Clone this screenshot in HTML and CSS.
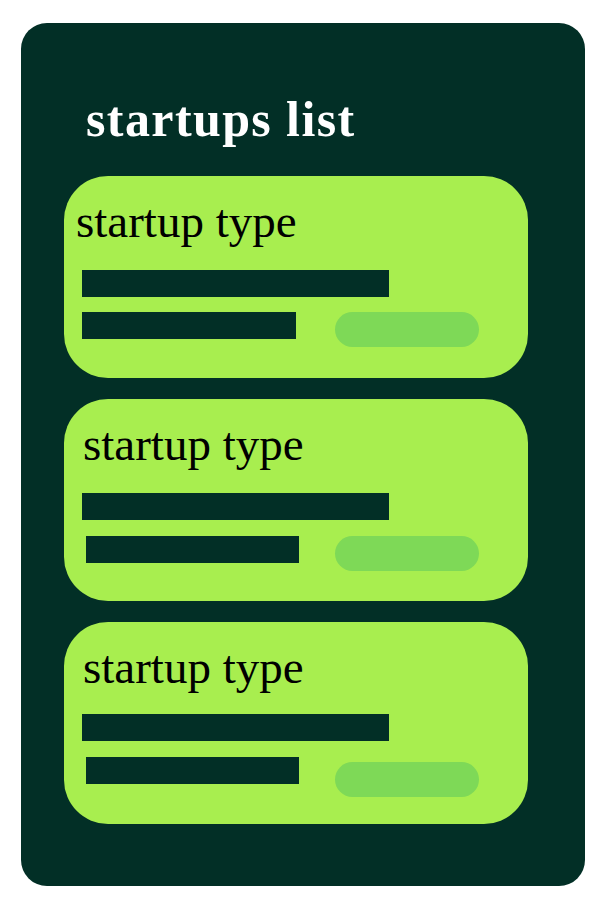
FILE: index.html
```html
<!DOCTYPE html>
<html>
<head>
<meta charset="utf-8">
<link rel="stylesheet" href="styles.css">
</head>
<body>
<main class="panel">
  <h1 class="panel__title">startups list</h1>
  <section class="list">
    <article class="card">
      <h2 class="card__title">startup type</h2>
      <div class="bar bar--long"></div>
      <div class="card__row">
        <div class="bar bar--short"></div>
        <div class="pill"></div>
      </div>
    </article>
    <article class="card card--inset">
      <h2 class="card__title">startup type</h2>
      <div class="bar bar--long"></div>
      <div class="card__row">
        <div class="bar bar--short"></div>
        <div class="pill"></div>
      </div>
    </article>
    <article class="card card--inset card--low">
      <h2 class="card__title">startup type</h2>
      <div class="bar bar--long"></div>
      <div class="card__row">
        <div class="bar bar--short"></div>
        <div class="pill"></div>
      </div>
    </article>
  </section>
</main>
</body>
</html>
```
FILE: styles.css
```css
html, body {
  margin: 0;
  padding: 0;
  background: #ffffff;
}

body {
  padding: 23px 0 0 21px;
}

.panel {
  box-sizing: border-box;
  width: 564px;
  height: 863px;
  background: #022f26;
  border-radius: 26px;
  padding: 71px 0 0 43px;
}

.panel__title {
  margin: 0 0 32px 22px;
  font-family: "Liberation Serif", serif;
  font-weight: 700;
  font-size: 50px;
  line-height: 50px;
  letter-spacing: 1.4px;
  color: #ffffff;
}

.list {
  display: flex;
  flex-direction: column;
  gap: 21px;
  width: 464px;
}

.card {
  box-sizing: border-box;
  height: 202px;
  background: #a8ee4f;
  border-radius: 44px;
  padding: 22px 0 0 18px;
}

.card__title {
  margin: 0 0 25px -6px;
  font-family: "Liberation Serif", serif;
  font-weight: 400;
  font-size: 47px;
  line-height: 47px;
  color: #000000;
}

.card--inset .card__title {
  margin-left: 1px;
}

.card--low .card__title {
  margin-bottom: 23px;
}

.bar {
  background: #022f26;
  height: 27px;
}

.bar--long {
  width: 307px;
}

.bar--short {
  width: 214px;
}

.card__row {
  display: flex;
  align-items: flex-start;
  margin-top: 15px;
}

.card__row .pill {
  margin-left: 39px;
}

.card--inset .card__row {
  margin-top: 16px;
}

.card--inset .bar--short {
  margin-left: 4px;
  width: 213px;
}

.card--inset .card__row .pill {
  margin-left: 36px;
}

.card--low .pill {
  margin-top: 5px;
}

.pill {
  width: 144px;
  height: 35px;
  border-radius: 18px;
  background: #7ed957;
}
```
